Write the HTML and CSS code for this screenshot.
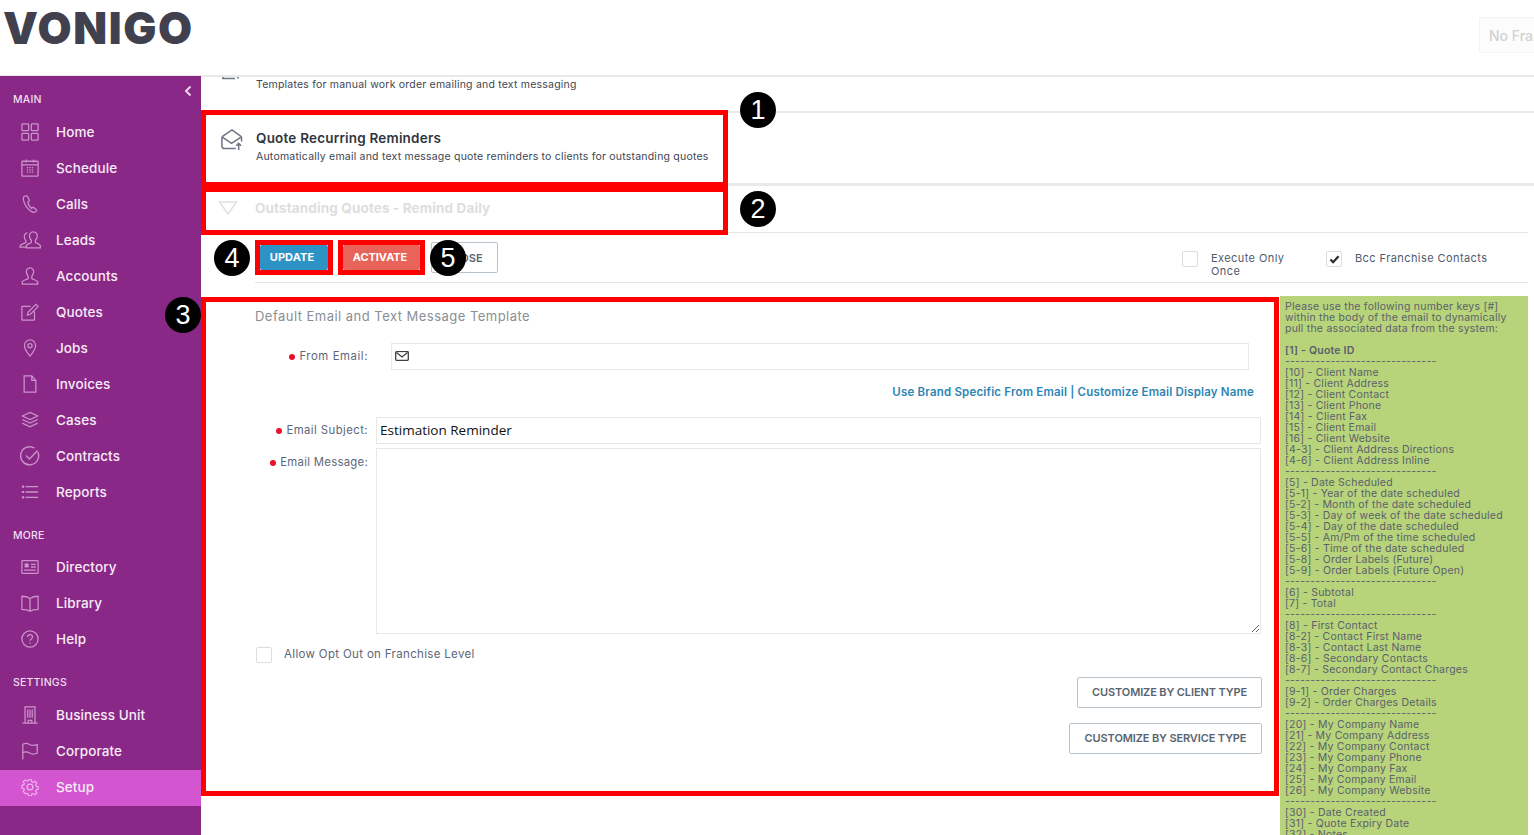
FILE: index.html
```html
<!DOCTYPE html>
<html lang="en">
<head>
<meta charset="utf-8">
<title>Vonigo - Quote Recurring Reminders</title>
<link rel="stylesheet" href="styles.css">
</head>
<body>
<div class="page">
  <header class="top">
    <div class="logo">VONIGO</div>
    <div class="franchise">No Franchise</div>
  </header>
  <div class="body">
    <nav class="side">
      <svg class="collapse" viewBox="0 0 8 12"><path d="M6.500 1.500 2 6l4.500 4.500"/></svg>
      <div class="sec sec-first">MAIN</div>
      <a class="item"><svg class="ico" viewBox="0 0 20 20"><rect x="1" y="1" width="7.500" height="7.500" rx=".8"/><rect x="11.500" y="1" width="7.500" height="7.500" rx=".8"/><rect x="1" y="11.500" width="7.500" height="7.500" rx=".8"/><rect x="11.500" y="11.500" width="7.500" height="7.500" rx=".8"/></svg>Home</a>
      <a class="item"><svg class="ico" viewBox="0 0 20 20"><rect x="1" y="2.500" width="18" height="16.500" rx=".8"/><path d="M1 6.500h18M6 .5v3.500M14 .5v3.500M6.500 9.500h1.500M9.300 9.500h1.500M12 9.500h1.500M6.500 12h1.500M9.300 12h1.500M12 12h1.500M6.500 14.500h1.500M9.300 14.500h1.500M12 14.500h1.500"/></svg>Schedule</a>
      <a class="item"><svg class="ico" viewBox="0 0 20 20"><path d="M4.500 1C3 1.500 2.300 3 2.600 5c.8 5.500 5 11.500 10.400 14 1.600.6 3.500-.2 4.200-1.500.2-.4.100-.8-.2-1.100l-2.800-2.500c-.4-.3-.9-.3-1.200 0l-1.200 1.100c-2.200-1.500-3.800-4.300-4.300-7l1.400-1c.4-.3.500-.7.400-1.100L7.200 1.700C7 1.100 5.500.6 4.500 1z"/></svg>Calls</a>
      <a class="item"><svg class="ico ico-wide" viewBox="0 0 24 20"><path d="M9 2.200C6.500 2.500 5.300 4.800 5.800 7.500c.3 1.500 1 2.500 1.700 3.500v1.800c-2 1.200-5.300 1.500-6.500 3.700v1.500h6.500M15.500 1c-3 0-4.500 2.500-4 5.500.3 1.800 1.200 3 2 4v2.300c-2 1.500-4.500 1.500-5.500 3.500v2.500h15.500v-2.500c-1-2-3.500-2-5.500-3.500v-2.300c.8-1 1.700-2.200 2-4 .5-3-1-5.500-4.500-5.500z"/></svg>Leads</a>
      <a class="item"><svg class="ico" viewBox="0 0 20 20"><path d="M10 1C7 1 5.500 3.300 6 6.300c.3 1.800 1.200 3 2 4v2.500c-2 1.500-5 1.500-6.500 3.500V19h17v-2.700c-1.500-2-4.500-2-6.500-3.500v-2.500c.8-1 1.700-2.200 2-4 .5-3-1-5.300-4-5.300z"/></svg>Accounts</a>
      <a class="item"><svg class="ico" viewBox="0 0 20 20"><path d="M15 9.500v8.700a.8.8 0 0 1-.8.8H1.800a.8.8 0 0 1-.8-.8V4.500a.8.8 0 0 1 .8-.8h8.700M8 10l-1 3.500 3.500-1L19 4 16.500 1.500z"/></svg>Quotes</a>
      <a class="item"><svg class="ico" viewBox="0 0 20 20"><path d="M10 19C7 15.500 3.800 11.500 3.800 7.300a6.200 6.200 0 0 1 12.400 0c0 4.200-3.200 8.200-6.200 11.700z"/><circle cx="10" cy="7.500" r="2.300"/></svg>Jobs</a>
      <a class="item"><svg class="ico" viewBox="0 0 20 20"><path d="M3.500 1h8.500l4.500 5v13h-13zM12 1v5h4.500"/></svg>Invoices</a>
      <a class="item"><svg class="ico" viewBox="0 0 20 20"><path d="M10 1.500l8.500 4-8.500 4-8.500-4zM1.500 9.500l8.500 4 8.500-4M1.500 13.500l8.500 4 8.500-4"/></svg>Cases</a>
      <a class="item"><svg class="ico ico-big" viewBox="0 0 20 20"><path d="M17.800 6A9 9 0 1 1 14.500 2.200M6 9.500l3.500 3.500 8-8.500"/></svg>Contracts</a>
      <a class="item"><svg class="ico" viewBox="0 0 20 20"><path d="M5 4h14M5 10h14M5 16h14"/><path class="thick" d="M1 4h2.500M1 10h2.500M1 16h2.500"/></svg>Reports</a>
      <div class="sec">MORE</div>
      <a class="item"><svg class="ico" viewBox="0 0 20 20"><rect x="1" y="3" width="18" height="14" rx=".8"/><path d="M11 7h5.500M11 10h5.500M3.500 13.500h13"/><rect class="fill" x="4" y="6" width="4.500" height="4.500"/></svg>Directory</a>
      <a class="item"><svg class="ico" viewBox="0 0 20 20"><path d="M10 5C8 3.500 5 2.500 1 2.500v14.500c3.500 0 6.500.5 9 2 2.500-1.500 5.500-2 9-2V2.500C15 2.500 12 3.500 10 5zM10 5v14"/></svg>Library</a>
      <a class="item"><svg class="ico" viewBox="0 0 20 20"><circle cx="10" cy="10" r="9"/><path d="M7.300 7.800c0-3.500 5.500-3.500 5.500 0 0 2-2.800 2.200-2.800 4.200M10 14v1.200"/></svg>Help</a>
      <div class="sec sec-last">SETTINGS</div>
      <a class="item"><svg class="ico" viewBox="0 0 20 20"><path d="M4.500 19V1h11v18M1.500 19h17M8 19v-3h4v3M7.500 4v9M10 4v9M12.500 4v9" /></svg>Business Unit</a>
      <a class="item"><svg class="ico" viewBox="0 0 20 20"><path d="M2 19.500V2.500c3-1.500 5.500-1 7.500.2s5 1.600 8.500.3v9.500c-3.500 1.300-6.500.9-8.500-.3s-4.500-1.700-7.500-.2"/></svg>Corporate</a>
      <a class="item item-on"><svg class="ico ico-on" viewBox="0 0 20 20"><circle cx="10" cy="10" r="3.200"/><path d="M8.300 1h3.400l.5 2.500 1.700.7 2.100-1.400 2.400 2.400-1.400 2.100.7 1.700 2.300.5v3.400l-2.300.5-.7 1.700 1.400 2.100-2.400 2.400-2.100-1.400-1.700.7-.5 2.100H8.300l-.5-2.100-1.700-.7L4 18l-2.400-2.400L3 13.500l-.7-1.700L0 11.300V7.900l2.300-.5.7-1.700L1.600 3.600 4 1.200l2.100 1.400 1.700-.7z" transform="translate(1 1) scale(.9)"/></svg>Setup</a>
    </nav>
    <main class="main">
      <section class="row row-cut">
        <svg class="row-ico" viewBox="0 0 18 3"><path d="M1 0v1.500h12M16 0v1.500"/></svg>
        <p class="row-desc">Templates for manual work order emailing and text messaging</p>
      </section>
      <section class="row row-head">
        <svg class="row-ico" viewBox="0 0 24 24"><path d="M16.500 21.500H4.500A2.500 2.500 0 0 1 2 19v-8.500c0-.8.4-1.500 1-2L12.500 2 21.500 8.500c.6.5 1 1.200 1 2v3.500M2.500 9.500l9.500 6.500 10-6.500M19.500 23v-7M17 18.500l2.500-2.500 2.500 2.500"/></svg>
        <div>
          <h1 class="row-title">Quote Recurring Reminders</h1>
          <p class="row-desc">Automatically email and text message quote reminders to clients for outstanding quotes</p>
        </div>
      </section>
      <section class="row row-muted">
        <svg class="tri" viewBox="0 0 20 14"><path d="M1.500 1h17L10 13z"/></svg>
        <h2 class="muted-title">Outstanding Quotes - Remind Daily</h2>
      </section>
      <div class="actions">
        <button class="btn btn-blue">UPDATE</button>
        <button class="btn btn-red">ACTIVATE</button>
        <button class="btn btn-plain">CLOSE</button>
        <label class="opt opt-a"><span class="box"></span><span>Execute Only Once</span></label>
        <label class="opt opt-b"><span class="box"><svg class="chk" viewBox="0 0 12 10"><path d="M1.500 5l3 3 6-6.500"/></svg></span><span>Bcc Franchise Contacts</span></label>
      </div>
      <div class="lower">
        <form class="form">
          <h3 class="form-title">Default Email and Text Message Template</h3>
          <div class="field field-from">
            <label class="lbl lbl-req">From Email:</label>
            <div class="from-box"><svg class="mail" viewBox="0 0 14 10"><rect x=".7" y=".7" width="12.600" height="8.600" rx=".8"/><path d="M1.500 1.500 7 6l5.500-4.500"/></svg></div>
          </div>
          <div class="links"><a>Use Brand Specific From Email</a> | <a>Customize Email Display Name</a></div>
          <div class="field field-subj">
            <label class="lbl lbl-req">Email Subject:</label>
            <input class="txt" type="text" value="Estimation Reminder">
          </div>
          <div class="field field-msg">
            <label class="lbl lbl-req lbl-top">Email Message:</label>
            <textarea class="area"></textarea>
          </div>
          <label class="optout"><span class="box"></span><span>Allow Opt Out on Franchise Level</span></label>
          <div class="cust"><button type="button" class="btn btn-out btn-c1">CUSTOMIZE BY CLIENT TYPE</button></div>
          <div class="cust cust-2"><button type="button" class="btn btn-out btn-c2">CUSTOMIZE BY SERVICE TYPE</button></div>
        </form>
        <aside class="keys">Please use the following number keys [#]
within the body of the email to dynamically
pull the associated data from the system:

<b>[1] - Quote ID</b>
------------------------------
[10] - Client Name
[11] - Client Address
[12] - Client Contact
[13] - Client Phone
[14] - Client Fax
[15] - Client Email
[16] - Client Website
[4-3] - Client Address Directions
[4-6] - Client Address Inline
------------------------------
[5] - Date Scheduled
[5-1] - Year of the date scheduled
[5-2] - Month of the date scheduled
[5-3] - Day of week of the date scheduled
[5-4] - Day of the date scheduled
[5-5] - Am/Pm of the time scheduled
[5-6] - Time of the date scheduled
[5-8] - Order Labels (Future)
[5-9] - Order Labels (Future Open)
------------------------------
[6] - Subtotal
[7] - Total
------------------------------
[8] - First Contact
[8-2] - Contact First Name
[8-3] - Contact Last Name
[8-6] - Secondary Contacts
[8-7] - Secondary Contact Charges
------------------------------
[9-1] - Order Charges
[9-2] - Order Charges Details
------------------------------
[20] - My Company Name
[21] - My Company Address
[22] - My Company Contact
[23] - My Company Phone
[24] - My Company Fax
[25] - My Company Email
[26] - My Company Website
------------------------------
[30] - Date Created
[31] - Quote Expiry Date
[32] - Notes</aside>
      </div>
    </main>
  </div>
  <div class="mark mark-1"></div>
  <div class="mark mark-2"></div>
  <div class="mark mark-3"></div>
  <div class="mark mark-4"></div>
  <div class="mark mark-5"></div>
  <div class="num num-1">1</div>
  <div class="num num-2">2</div>
  <div class="num num-3">3</div>
  <div class="num num-4">4</div>
  <div class="num num-5">5</div>
</div>
</body>
</html>
```
FILE: styles.css
```css
* { box-sizing: border-box; }
html, body { margin: 0; padding: 0; height: 100%; overflow: hidden; background: #fff; }
body { font-family: Inter, "Open Sans", sans-serif; color: #4b5363; }
.page { position: relative; width: 1534px; height: 835px; overflow: hidden; display: flex; flex-direction: column; }

.top { height: 77px; flex: none; display: flex; justify-content: space-between; align-items: flex-start; border-bottom: 2px solid #e9e9e9; }
.logo { font-size: 44px; line-height: 56px; font-weight: 900; color: #40404f; letter-spacing: 1.6px; margin-left: 3px; }
.franchise { width: 120px; height: 36px; margin: 17px -65px 0 0; padding-left: 9px; line-height: 35px; font-size: 14px; font-weight: 500; color: #d2d2d2; background: #fcfcfc; border: 1px solid #f4f4f4; border-radius: 2px; white-space: nowrap; overflow: hidden; }

.body { flex: 1; display: flex; min-height: 0; }
.side { position: relative; width: 201px; flex: none; margin-top: -1px; background: #8a2887; padding-top: 17px; color: #f7ecf7; }
.collapse { position: absolute; left: 184px; top: 9px; width: 8px; height: 12px; fill: none; stroke: #ecd6eb; stroke-width: 2; }
.sec { height: 14px; line-height: 14px; font-size: 10.500px; font-weight: 500; letter-spacing: .2px; padding-left: 13px; margin: 19px 0 6px; color: #f1dff0; }
.sec-first { margin-top: 0; margin-bottom: 7px; }
.sec-last { margin-bottom: 7px; }
.item { display: flex; align-items: center; height: 36px; padding-left: 21px; font-size: 13.500px; font-weight: 500; letter-spacing: .1px; }
.item-on { height: 36px; margin-top: 1px; padding-bottom: 2px; background: #d355d0; }
.ico { width: 18px; height: 18px; margin-right: 17px; flex: none; fill: none; stroke: #cb93ca; stroke-width: 1.400; }
.ico-wide { width: 24px; margin-left: -3px; margin-right: 14px; }
.ico-big { width: 20px; height: 20px; margin-left: -1px; margin-right: 16px; }
.ico-on { stroke: #eeb6ec; }
.thick { stroke-width: 2.400; }
.fill { fill: #cb93ca; stroke: none; }

.main { flex: 1; min-width: 0; display: flex; flex-direction: column; }
.row { display: flex; flex: none; }
.row-cut { position: relative; height: 36px; border-bottom: 2px solid #e9e9e9; padding: 1px 0 0 55px; }
.row-cut .row-ico { position: absolute; left: 21px; top: 0; width: 18px; height: 3px; }
.row-ico { fill: none; stroke: #6d7684; stroke-width: 1.600; }
.row-desc { margin: 0; font-size: 10.500px; line-height: 14px; letter-spacing: .21px; color: #3d4652; }
.row-head { height: 73px; padding: 15px 0 0 19px; gap: 13px; border-bottom: 3px solid #e9e9e9; }
.row-head .row-ico { width: 23px; height: 23px; flex: none; }
.row-title { margin: 0 0 1px; font-size: 13.500px; line-height: 21px; font-weight: 600; letter-spacing: .2px; color: #2f3540; }
.row-muted { height: 46px; align-items: center; padding: 0 0 3px 17px; gap: 17px; }
.tri { width: 20px; height: 14px; flex: none; fill: none; stroke: #dfdfdf; stroke-width: 1.500; }
.muted-title { margin: 0; font-size: 13.500px; font-weight: 700; color: #dedede; letter-spacing: .13px; }

.actions { flex: none; display: flex; align-items: flex-start; height: 51px; margin: 0 6px 0 54px; padding: 9px 0 0 5px; border-top: 1px solid #e5e5e5; border-bottom: 1px solid #e5e5e5; position: relative; }
.actions::before { content: ""; position: absolute; top: -1px; left: -54px; width: 54px; height: 1px; background: #e5e5e5; }
.btn { font-family: inherit; font-size: 11px; font-weight: 700; border-radius: 2px; cursor: pointer; padding: 0; white-space: nowrap; }
.btn-blue { width: 68px; height: 25px; margin-top: 3px; padding: 0 4px 2px 0; color: #fff; border: 0; background: #2d93c5; letter-spacing: .1px; }
.btn-red { width: 77px; height: 25px; margin: 3px 0 0 15px; padding: 0 3px 2px 0; color: #fff; border: 0; background: #e8635a; letter-spacing: -.05px; }
.btn-plain { width: 67px; height: 31px; margin-left: 11px; background: #fff; color: #5b6470; border: 1px solid #b9c3cb; font-weight: 600; }
.opt { display: flex; align-items: flex-start; gap: 13px; font-size: 11px; line-height: 13px; letter-spacing: .42px; color: #4f5a6c; }
.opt-a { margin-left: auto; width: 144px; padding-top: 10px; }
.opt-a span:last-child { width: 86px; }
.opt-b { width: 202px; padding-top: 10px; }
.box { width: 16px; height: 16px; flex: none; display: flex; align-items: center; justify-content: center; border: 1px solid #ddd; border-radius: 2px; background: #fff; margin-top: -1px; }
.chk { width: 11px; height: 9px; fill: none; stroke: #2b2b2b; stroke-width: 2.400; }

.lower { flex: 1; min-height: 0; display: flex; align-items: flex-start; }
.form { width: 1079px; flex: none; padding: 26px 18px 0 0; }
.form-title { margin: 0 0 20px 54px; font-size: 13px; line-height: 14px; font-weight: 400; letter-spacing: .47px; color: #8a8e95; }
.field { display: flex; margin-right: 1px; }
.lbl { width: 167px; flex: none; text-align: right; font-size: 11.300px; line-height: 27px; letter-spacing: .3px; color: #5d6778; }
.lbl-req::before { content: ""; display: inline-block; width: 6px; height: 6px; margin-right: 4px; border-radius: 50%; background: #e8112d; vertical-align: 0; }
.lbl-top { line-height: 28px; }
.field-from { height: 27px; margin-right: 13px; }
.field-from .lbl { letter-spacing: .6px; }
.field-subj .lbl { letter-spacing: .45px; }
.from-box { flex: 1; margin-left: 23px; padding: 7px 0 0 3px; border: 1px solid #e8e8e8; }
.mail { display: block; width: 14px; height: 10px; fill: #fff; stroke: #3f3f3f; stroke-width: 1.300; }
.links { margin: 15px 8px 0 0; text-align: right; font-size: 11.500px; line-height: 14px; font-weight: 600; letter-spacing: .18px; color: #2d85b5; }
.field-subj { height: 27px; margin-top: 18px; }
.txt { flex: 1; min-width: 0; margin-left: 8px; padding: 0 3px 2px; border: 1px solid #e8e8e8; font-family: "Open Sans", sans-serif; font-size: 13.500px; color: #111; outline: 0; }
.field-msg { height: 186px; margin-top: 4px; }
.area { flex: 1; min-width: 0; margin: 0 0 0 8px; border: 1px solid #e8e8e8; outline: 0; }
.optout { display: flex; align-items: center; gap: 12px; margin: 13px 0 0 55px; height: 16px; font-size: 11.500px; letter-spacing: .33px; color: #5d6778; }
.optout span:last-child { margin-top: -2px; }
.optout .box { margin-top: 0; }
.cust { display: flex; justify-content: flex-end; margin-top: 14px; }
.cust-2 { margin-top: 15px; }
.btn-out { height: 31px; padding-bottom: 2px; background: #fff; color: #596470; border: 1px solid #b9c3cb; font-weight: 600; letter-spacing: -.12px; }
.btn-c1 { width: 185px; }
.btn-c2 { width: 193px; }
.keys { width: 248px; height: 540px; flex: none; margin-top: 13px; padding: 5px 0 0 5px; overflow: hidden; white-space: pre; background: #b7d47b; color: #5c5f6c; font-size: 10.500px; line-height: 11px; letter-spacing: .22px; }
.keys b { font-weight: 600; }

.mark { position: absolute; border: 5px solid #f00; pointer-events: none; }
.mark-1 { left: 201px; top: 110px; width: 527px; height: 77px; }
.mark-2 { left: 201px; top: 187px; width: 527px; height: 48px; }
.mark-3 { left: 201px; top: 297px; width: 1078px; height: 499px; }
.mark-4 { left: 255px; top: 240px; width: 78px; height: 35px; }
.mark-5 { left: 338px; top: 240px; width: 87px; height: 35px; }
.num { position: absolute; width: 36px; height: 36px; border-radius: 50%; background: #000; color: #fff; font-family: "Liberation Sans", Arial, sans-serif; font-size: 27px; line-height: 37px; text-align: center; }
.num-1 { left: 740px; top: 92px; }
.num-2 { left: 740px; top: 191px; }
.num-3 { left: 165px; top: 297px; }
.num-4 { left: 214px; top: 240px; }
.num-5 { left: 430px; top: 240px; }
```
